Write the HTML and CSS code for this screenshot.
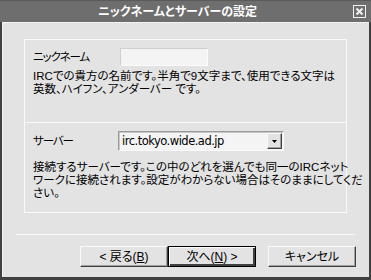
FILE: index.html
```html
<!DOCTYPE html>
<html lang="ja">
<head>
<meta charset="utf-8">
<link rel="stylesheet" href="styles.css">
</head>
<body>
<div class="window">
  <div class="titlebar">
    <span class="title">ニックネームとサーバーの設定</span>
    <span class="close"><svg width="11" height="11" viewBox="0 0 11 11"><path d="M2.5 2.5 L8.5 8.5 M8.5 2.5 L2.5 8.5" stroke="#f0f0f0" stroke-width="2"/></svg></span>
  </div>
  <div class="client">
    <div class="group">
      <div class="section first">
        <div class="row">
          <span class="label">ニックネーム</span>
          <span class="input"></span>
        </div>
        <p class="desc">IRCでの貴方の名前です。半角で9文字まで、使用できる文字は<br>英数、ハイフン、アンダーバー です。</p>
      </div>
      <div class="section second">
        <div class="row">
          <span class="label">サーバー</span>
          <span class="combo"><span class="combo-text">irc.tokyo.wide.ad.jp</span><span class="drop"><svg width="5" height="3" viewBox="0 0 5 3"><path d="M0 0 H5 L2.5 3 Z" fill="#000"/></svg></span></span>
        </div>
        <p class="desc">接続するサーバーです。この中のどれを選んでも同一のIRCネット<br>ワークに接続されます。設定がわからない場合はそのままにしてくだ<br>さい。</p>
      </div>
    </div>
    <div class="separator"></div>
    <div class="buttons">
      <span class="btn">&lt; 戻る(<u>B</u>)</span>
      <span class="btn default">次へ(<u>N</u>) &gt;</span>
      <span class="btn cancel">キャンセル</span>
    </div>
  </div>
</div>
</body>
</html>
```
FILE: styles.css
```css
* { box-sizing: border-box; }
html, body { margin: 0; padding: 0; background: #404040; }
body {
  font-family: "Liberation Sans", "Noto Sans CJK JP", sans-serif;
  font-size: 11.5px;
  font-feature-settings: "palt";
  color: #000;
}
.window {
  width: 371px;
  height: 280px;
  background: #404040;
  padding: 0 2px 3px 2px;
  display: flex;
  flex-direction: column;
}
.titlebar {
  height: 22px;
  margin: 0 -2px;
  padding: 0 2px;
  background: #6e6e6e;
  border-top: 1px solid #5a5a5a;
  display: flex;
  align-items: center;
}
.title {
  flex: 1;
  text-align: center;
  color: #fff;
  font-weight: bold;
  font-size: 12px;
  line-height: 20px;
}
.close {
  margin-right: 3px;
  width: 13px;
  height: 13px;
  border: 1px solid #f0f0f0;
  display: flex;
  align-items: center;
  justify-content: center;
  margin-top: -1px;
}
.close svg { display: block; }
.client {
  flex: 1;
  background: #e3e3e3;
  border-top: 1px solid #f4f4f4;
  border-left: 1px solid #f4f4f4;
  padding: 16px 0 0 0;
  display: flex;
  flex-direction: column;
}
.group {
  margin-left: 21px;
  width: 323px;
  height: 174px;
  border: 1px solid #fafafa;
  display: flex;
  flex-direction: column;
}
.section { padding: 8px 0 0 8px; }
.section.first { height: 83px; border-bottom: 1px solid #fafafa; }
.section.second { flex: 1; }
.row { display: flex; align-items: center; }
.label { width: 87px; line-height: 16px; font-size: 11.5px; letter-spacing: -1.1px; }
.input {
  width: 88px;
  height: 18px;
  background: #f4f4f4;
  border-top: 1px solid #cfcfcf;
  border-left: 1px solid #cfcfcf;
  border-right: 1px solid #fbfbfb;
  border-bottom: 1px solid #fbfbfb;
}
.desc {
  margin: 4px 0 0 0;
  line-height: 13px;
  white-space: nowrap;
}
.second .desc { margin-top: 10px; }
.combo {
  width: 166px;
  height: 20px;
  margin-left: -2px;
  background: #f4f4f4;
  border-top: 1px solid #9a9a9a;
  border-left: 1px solid #9a9a9a;
  border-right: 1px solid #fafafa;
  border-bottom: 1px solid #fafafa;
  box-shadow: inset 1px 1px 0 #c8c8c8;
  display: flex;
  align-items: center;
  padding: 1px 1px 1px 3px;
}
.combo-text { flex: 1; line-height: 16px; font-family: "DejaVu Sans", sans-serif; font-size: 11.5px; letter-spacing: -0.5px; }
.drop {
  width: 15px;
  height: 16px;
  background: #e3e3e3;
  border-top: 1px solid #fafafa;
  border-left: 1px solid #fafafa;
  border-right: 1px solid #404040;
  border-bottom: 1px solid #404040;
  box-shadow: inset -1px -1px 0 #a0a0a0;
  display: flex;
  align-items: center;
  justify-content: center;
}
.drop svg { display: block; }
.separator {
  margin: 21px 14px 0 13px;
  height: 1px;
  background: #fafafa;
}
.buttons {
  display: flex;
  justify-content: flex-end;
  margin: 11px 13px 0 0;
}
.btn {
  width: 88px;
  height: 21px;
  background: #e3e3e3;
  border-top: 1px solid #fafafa;
  border-left: 1px solid #fafafa;
  border-right: 1px solid #404040;
  border-bottom: 1px solid #404040;
  box-shadow: inset -1px -1px 0 #a0a0a0;
  display: flex;
  align-items: center;
  justify-content: center;
  font-size: 12px;
  line-height: 16px;
}
.btn.default {
  border: 1px solid #000;
  box-shadow: inset 1px 1px 0 #fafafa, inset -2px -2px 0 #404040;
}
.btn.cancel { margin-left: 12px; }
u { text-decoration-thickness: 1px; text-underline-offset: 1px; }
```
